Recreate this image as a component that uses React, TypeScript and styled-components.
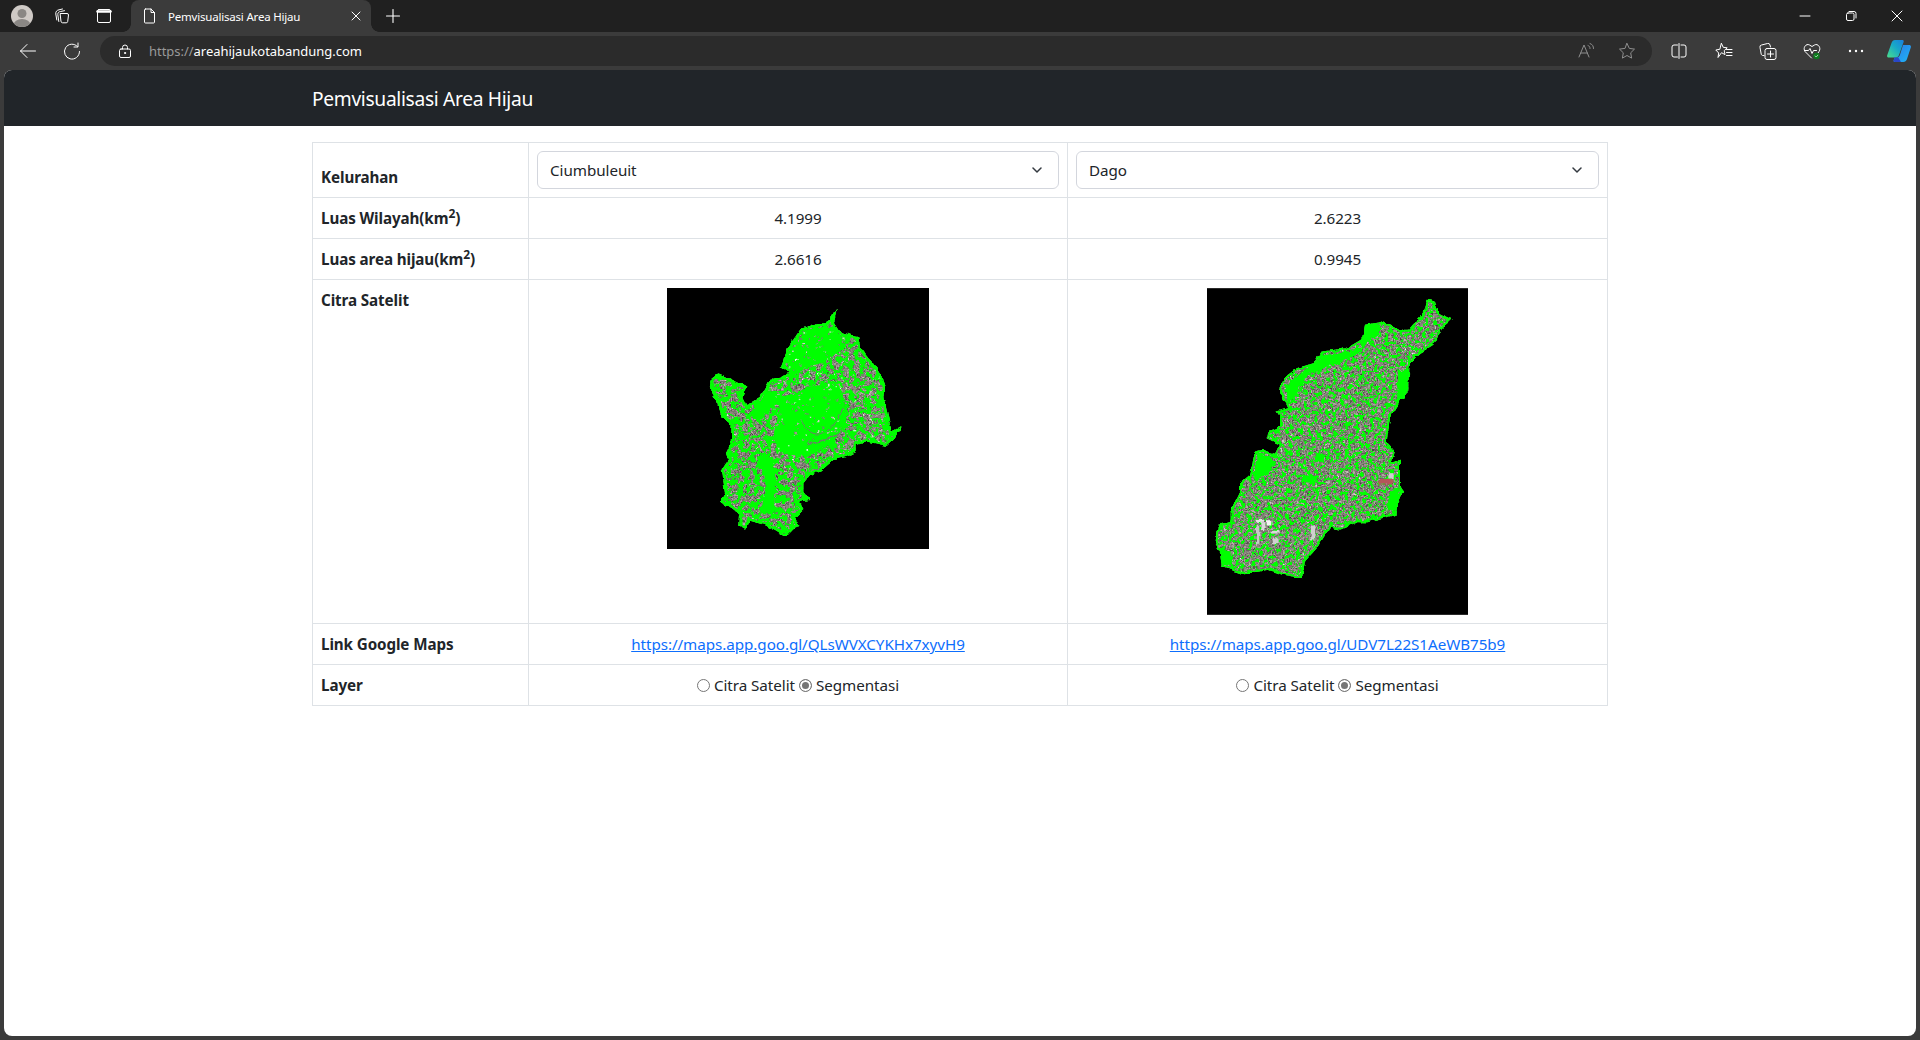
import React from "react";
import styled, { createGlobalStyle } from "styled-components";

const GlobalStyle = createGlobalStyle`
  html, body { margin: 0; padding: 0; height: 1040px; background: #3b3b3b; overflow: hidden; }
  body { font-family: "Noto Sans", "Open Sans", "Liberation Sans", sans-serif; }
  * { box-sizing: border-box; }
`;

const Frame = styled.div`
  width: 1920px;
  height: 1040px;
  display: flex;
  flex-direction: column;
  background: #3b3b3b;
`;

const TabStrip = styled.div`
  height: 32px;
  flex: none;
  display: flex;
  align-items: center;
  background: #202020;
  color: #fff;
`;

const Avatar = styled.div`
  width: 22px;
  height: 22px;
  margin-left: 11px;
  border-radius: 50%;
  flex: none;
  overflow: hidden;
  display: flex;
`;

const StripButton = styled.div<{ $w: number }>`
  width: ${(p) => p.$w}px;
  height: 32px;
  flex: none;
  display: flex;
  align-items: center;
  justify-content: center;
`;

const Tab = styled.div`
  position: relative;
  width: 240px;
  height: 32px;
  margin-left: 14px;
  flex: none;
  display: flex;
  align-items: center;
  padding: 0 10px 0 11px;
  background: #3b3b3b;
  border-radius: 8px 8px 0 0;

  &::before,
  &::after {
    content: "";
    position: absolute;
    bottom: 0;
    width: 8px;
    height: 8px;
  }
  &::before {
    left: -8px;
    background: radial-gradient(circle at 0 0, #202020 7.5px, #3b3b3b 8px);
  }
  &::after {
    right: -8px;
    background: radial-gradient(circle at 100% 0, #202020 7.5px, #3b3b3b 8px);
  }
`;

const TabTitle = styled.div`
  margin-left: 10px;
  flex: 1;
  font-size: 11.5px;
  letter-spacing: -0.2px;
  white-space: nowrap;
  color: #fff;
`;

const Spacer = styled.div`
  flex: 1;
`;

const Toolbar = styled.div`
  height: 38px;
  flex: none;
  display: flex;
  align-items: center;
  background: #3b3b3b;
`;

const NavButton = styled.div<{ $w: number }>`
  width: ${(p) => p.$w}px;
  height: 30px;
  flex: none;
  display: flex;
  align-items: center;
  justify-content: center;
`;

const AddressBar = styled.div`
  width: 1552px;
  height: 30px;
  margin: 0 4px 0 12px;
  flex: none;
  display: flex;
  align-items: center;
  padding: 0 5px 0 18px;
  border-radius: 15px;
  background: #2b2b2b;
`;

const Url = styled.div`
  margin-left: 17px;
  flex: 1;
  font-size: 13px;
  letter-spacing: -0.03px;
  color: #fff;
  white-space: nowrap;
`;

const UrlScheme = styled.span`
  color: #9a9a9a;
`;

const Viewport = styled.div`
  flex: 1;
  min-height: 0;
  margin: 0 4px 4px;
  display: flex;
  flex-direction: column;
  background: #fff;
  border-radius: 8px;
  overflow: hidden;
`;

const Navbar = styled.nav`
  height: 56px;
  flex: none;
  display: flex;
  align-items: center;
  padding-left: 308px;
  background: #212529;
  color: #fff;
  font-size: 19.2px;
  letter-spacing: -0.32px;
`;

const Content = styled.main`
  padding: 16px 0 0 308px;
`;

const CompareTable = styled.table`
  width: 1295px;
  border-collapse: collapse;
  table-layout: fixed;
  color: #212529;
  font-size: 15.2px;
  letter-spacing: -0.05px;
  line-height: 24px;
`;

const HeadCell = styled.th<{ $bottom?: boolean }>`
  padding: 8px;
  border: 1px solid #dee2e6;
  text-align: left;
  font-weight: 700;
  letter-spacing: -0.1px;
  vertical-align: ${(p) => (p.$bottom ? "bottom" : "top")};
  sup { font-size: 12px; line-height: 0; }
`;

const Cell = styled.td`
  padding: 8px;
  border: 1px solid #dee2e6;
  text-align: center;
  vertical-align: top;
`;

const SelectBox = styled.div`
  height: 38px;
  display: flex;
  align-items: center;
  justify-content: space-between;
  padding: 0 16px 0 12px;
  text-align: left;
  background: #fff;
  border: 1px solid #d3d6dd;
  border-radius: 6px;
`;

const MapLink = styled.a`
  color: #0d6efd;
  text-decoration: underline;
`;

const RadioGroup = styled.div`
  display: flex;
  align-items: center;
  justify-content: center;
  height: 24px;
`;

const RadioLabel = styled.span`
  margin-left: 4px;
  margin-right: 4px;

  &:last-child {
    margin-right: 0;
  }
`;

const RadioDot = styled.span<{ $on?: boolean }>`
  width: 13px;
  height: 13px;
  flex: none;
  border-radius: 50%;
  border: 1px solid #767676;
  background: ${(p) => (p.$on ? "#767676" : "#fff")};
  box-shadow: ${(p) => (p.$on ? "inset 0 0 0 2px #fff" : "none")};
`;

const MapSvg = styled.svg`
  display: block;
  margin: 0 auto;
  filter: blur(0.5px);
`;

const Chevron = () => (
  <svg width="10" height="6" viewBox="0 0 10 6" fill="none" stroke="#343a40" strokeWidth="1.5" strokeLinecap="round" strokeLinejoin="round">
    <path d="M1 1l4 4 4-4" />
  </svg>
);

const Ic = ({ s = 16, c = "#fff", w = 1, children }: { s?: number; c?: string; w?: number; children: React.ReactNode }) => (
  <svg width={s} height={s} viewBox={`0 0 ${s} ${s}`} fill="none" stroke={c} strokeWidth={w} strokeLinecap="round" strokeLinejoin="round">
    {children}
  </svg>
);

const Copilot = () => (
  <svg width="24" height="22" viewBox="0 0 24 22">
    <defs>
      <linearGradient id="cpA" x1="0" y1="1" x2="1" y2="0">
        <stop offset="0" stopColor="#4ade8c" />
        <stop offset="0.55" stopColor="#17a8c8" />
        <stop offset="1" stopColor="#1a7fe0" />
      </linearGradient>
      <linearGradient id="cpB" x1="0" y1="0" x2="1" y2="1">
        <stop offset="0" stopColor="#2a78e8" />
        <stop offset="1" stopColor="#1fb6f5" />
      </linearGradient>
    </defs>
    <path d="M8 0h7c1.400 0 2 .8 1.600 2L12 15c-.6 1.600-1.600 2.500-3.200 2.500H2C.5 17.500-.3 16.500.3 15L4.500 3C5.200 1 6.300 0 8 0z" fill="url(#cpA)" />
    <path d="M16 5h6c1.500 0 2.300 1 1.800 2.500L20 19c-.6 2-2 3-3.800 3H8c-1.200 0-1.700-.8-1.300-2l1-2.500h2c1.600 0 2.600-.9 3.200-2.500z" fill="url(#cpB)" />
    <path d="M11 17l3 5H8c-1.200 0-1.700-.8-1.300-2l1-2.500h2z" fill="#2a46c8" />
  </svg>
);

// seeded speckles so both maps stay the same between runs
const speckles = (seed: number, count: number, x0: number, y0: number, w: number, h: number, palette: string[]) => {
  let v = seed;
  const next = () => {
    v = (v * 16807) % 2147483647;
    return v / 2147483647;
  };
  const out: React.ReactNode[] = [];
  for (let i = 0; i < count; i++) {
    out.push(
      <rect
        key={i}
        x={x0 + next() * w}
        y={y0 + next() * h}
        width={2.5 + next() * 4}
        height={2.5 + next() * 3}
        fill={palette[Math.floor(next() * palette.length)]}
      />,
    );
  }
  return out;
};

const GREYS = ["#f2f2f2", "#b9b5b0", "#a5948f", "#8a8a82", "#8d7d78", "#75806f", "#9a9590", "#7c7c74", "#d8d0cc"];

const CIUM_OUTLINE =
  "M530 85L522 130L535 150L570 165L595 172L600 200L625 235L640 250L665 290L675 320L670 350L680 390L688 425L695 455L725 438L700 480L680 498L650 490L620 485L590 495L590 515L560 530L520 540L480 575L450 585L430 610L430 640L448 660L420 665L430 690L405 715L418 738L400 745L375 770L315 735L270 722L255 752L238 735L240 705L205 680L180 668L195 640L190 600L185 570L205 540L198 520L212 490L215 435L185 410L175 375L155 335L150 300L175 280L262 320L250 350L262 375L300 350L330 300L390 278L362 265L385 200L420 150L465 130L500 130Z";

const DAGO_OUTLINE =
  "M685 45L700 50L715 85L755 103L725 130L700 180L660 205L630 235L625 290L625 320L600 350L570 400L560 470L585 500L575 530L600 525L600 600L610 615L590 660L590 690L545 700L500 712L470 712L420 735L390 728L350 790L315 830L305 880L250 870L205 855L130 868L90 855L65 845L60 800L43 770L55 720L95 710L95 670L120 620L120 595L150 570L165 500L190 495L225 510L240 480L200 460L205 440L240 425L240 395L230 380L265 370L240 320L250 280L290 250L340 235L365 200L440 190L490 160L495 120L550 110L600 135L625 135L670 85L680 55Z";

const GreyNoise = ({ id, seed }: { id: string; seed: number }) => (
  <filter id={id} x="0" y="0" width="100%" height="100%" colorInterpolationFilters="sRGB">
    <feTurbulence type="fractalNoise" baseFrequency="0.24" numOctaves="2" seed={seed} />
    <feColorMatrix values="0.8 0 0 0 0.12  0.75 0 0 0 0.12  0.75 0 0 0 0.1  0 0 0 0 1" />
  </filter>
);

const GreenNoise = ({ id, seed, freq, cut }: { id: string; seed: number; freq: number; cut: number }) => (
  <filter id={id} x="0" y="0" width="100%" height="100%" colorInterpolationFilters="sRGB">
    <feTurbulence type="fractalNoise" baseFrequency={freq} numOctaves="4" seed={seed} />
    <feColorMatrix values={`0 0 0 0 0  0 0 0 0 1  0 0 0 0 0  14 0 0 0 ${-14 * cut}`} />
  </filter>
);

const Rough = ({ id, seed }: { id: string; seed: number }) => (
  <filter id={id} x="0" y="0" width="100%" height="100%" colorInterpolationFilters="sRGB">
    <feTurbulence type="fractalNoise" baseFrequency="0.05" numOctaves="2" seed={seed} result="n" />
    <feDisplacementMap in="SourceGraphic" in2="n" scale="14" xChannelSelector="R" yChannelSelector="G" />
  </filter>
);

const MapCiumbuleuit = () => (
  <MapSvg width="262" height="261" viewBox="21 24 786 783">
    <defs>
      <clipPath id="ciumClip">
        <path d={CIUM_OUTLINE} />
      </clipPath>
      <GreyNoise id="ciumGrey" seed={5} />
      <GreenNoise id="ciumGreen" seed={7} freq={0.06} cut={0.47} />
      <Rough id="ciumRough" seed={3} />
    </defs>
    <rect x="21" y="24" width="786" height="783" fill="#000" />
    <g filter="url(#ciumRough)">
      <g clipPath="url(#ciumClip)">
        <rect x="21" y="24" width="786" height="783" filter="url(#ciumGrey)" />
        {speckles(11, 500, 150, 85, 580, 690, GREYS)}
        <rect x="21" y="24" width="786" height="783" filter="url(#ciumGreen)" />
        <path d="M380 230L440 150L520 140L560 200L500 240L430 270L390 290Z" fill="#00ff00" />
        <path d="M340 470L360 360L440 320L540 310L560 420L520 490L440 530L360 520Z" fill="#00ff00" />
        <path d="M270 400L330 330L380 330L340 380L300 420Z" fill="#00ff00" />
        <path d="M290 530L320 620L300 700L340 700L350 600L330 520Z" fill="#00ff00" />
        {speckles(23, 420, 340, 150, 360, 400, GREYS)}
        <path d="M425 420C450 490 520 470 550 380" fill="none" stroke="#6f7a6a" strokeWidth="3" />
        <path d="M440 495C480 480 510 480 540 460" fill="none" stroke="#6f7a6a" strokeWidth="4" />
        <path d={CIUM_OUTLINE} fill="none" stroke="#00ff00" strokeWidth="18" />
      </g>
    </g>
  </MapSvg>
);

const MapDago = () => (
  <MapSvg width="261" height="327" viewBox="21 10 783 980">
    <defs>
      <clipPath id="dagoClip">
        <path d={DAGO_OUTLINE} />
      </clipPath>
      <GreyNoise id="dagoGrey" seed={9} />
      <GreenNoise id="dagoGreen" seed={12} freq={0.09} cut={0.52} />
      <Rough id="dagoRough" seed={6} />
    </defs>
    <rect x="21" y="10" width="783" height="980" fill="#000" />
    <g filter="url(#dagoRough)">
      <g clipPath="url(#dagoClip)">
        <rect x="21" y="10" width="783" height="980" filter="url(#dagoGrey)" />
        {speckles(31, 1000, 40, 45, 720, 840, GREYS)}
        <rect x="21" y="10" width="783" height="980" filter="url(#dagoGreen)" />
        <path d={DAGO_OUTLINE} fill="none" stroke="#00ff00" strokeWidth="12" />
        <path d="M490 120L545 120L530 150L470 195L370 215L300 265L260 300L262 360L285 335L320 270L400 240L480 205Z" fill="#00ff00" />
        <path d="M175 505L215 520L225 530L200 570L160 590Z" fill="#00ff00" />
        <path d="M55 790L65 840L100 845L90 800Z" fill="#00ff00" />
        <path d="M595 260L625 250L620 340L590 370Z" fill="#00ff00" />
        <path d="M570 620L600 610L590 675L560 680Z" fill="#00ff00" />
        <path d="M305 570L350 575L340 595L305 590Z" fill="#00ff00" />
        <path d="M345 505L375 510L370 530L345 530Z" fill="#00ff00" />
        <rect x="535" y="585" width="45" height="14" fill="#b5565a" />
        <rect x="565" y="562" width="16" height="22" fill="#cfcfcf" />
        <rect x="168" y="702" width="24" height="9" fill="#e6e6e6" />
        <rect x="184" y="712" width="12" height="24" fill="#d8d8d8" />
        <rect x="200" y="706" width="14" height="16" fill="#f4f4f4" />
        <rect x="168" y="720" width="10" height="60" fill="#c8c8c8" />
        <rect x="215" y="738" width="24" height="8" fill="#d8d8d8" />
        <rect x="218" y="758" width="18" height="20" fill="#d0d0d0" />
        <rect x="332" y="722" width="14" height="42" fill="#cfcfcf" />
      </g>
    </g>
  </MapSvg>
);

const Layers = () => (
  <RadioGroup>
    <RadioDot />
    <RadioLabel>Citra Satelit</RadioLabel>
    <RadioDot $on />
    <RadioLabel>Segmentasi</RadioLabel>
  </RadioGroup>
);

const App = () => (
  <Frame>
    <GlobalStyle />
    <TabStrip>
      <Avatar>
        <svg width="22" height="22" viewBox="0 0 22 22">
          <rect width="22" height="22" fill="#cfcac6" />
          <circle cx="11" cy="8.500" r="4.500" fill="#8a8784" />
          <ellipse cx="11" cy="20" rx="8.500" ry="6" fill="#8a8784" />
        </svg>
      </Avatar>
      <StripButton $w={58}>
        <Ic>
          <path d="M6.500 5.500h6.500a1.500 1.500 0 0 1 1.500 1.500l-.8 6.500a1.500 1.500 0 0 1-1.500 1.300H8.500a1.500 1.500 0 0 1-1.500-1.300z" />
          <path d="M4.800 13.500L3.800 6.500C3.700 4.500 5 3.700 6.500 3.500l4-.8" />
          <path d="M2.800 12L1.800 6C1.500 3.500 3 2.200 5 1.800L8.500 1" />
        </Ic>
      </StripButton>
      <StripButton $w={26}>
        <Ic>
          <rect x="1.500" y="1.500" width="13" height="13" rx="1.500" />
          <path d="M1.500 3.500h13" strokeWidth="2.500" />
        </Ic>
      </StripButton>
      <Tab>
        <Ic>
          <path d="M3.500 1h5.500l3.500 3.500V14a1 1 0 0 1-1 1h-8a1 1 0 0 1-1-1V2a1 1 0 0 1 1-1z" />
          <path d="M9 1v3.500h3.500" />
        </Ic>
        <TabTitle>Pemvisualisasi Area Hijau</TabTitle>
        <Ic s={10} w={1}>
          <path d="M1 1l8 8M9 1l-8 8" />
        </Ic>
      </Tab>
      <StripButton $w={44}>
        <Ic s={14} w={1.100}>
          <path d="M7 0.500v13M0.500 7h13" />
        </Ic>
      </StripButton>
      <Spacer />
      <StripButton $w={46}>
        <Ic s={12}>
          <path d="M1 6h10" />
        </Ic>
      </StripButton>
      <StripButton $w={46}>
        <Ic s={12}>
          <rect x="1.500" y="3" width="7.500" height="7.500" rx="1.500" />
          <path d="M4 1.500h5a2 2 0 0 1 2 2V8" />
        </Ic>
      </StripButton>
      <StripButton $w={46}>
        <Ic s={12}>
          <path d="M1 1l10 10M11 1L1 11" />
        </Ic>
      </StripButton>
    </TabStrip>
    <Toolbar>
      <NavButton $w={56}>
        <Ic s={18} w={1}>
          <path d="M1.500 9h15M8 2.500L1.500 9 8 15.500" />
        </Ic>
      </NavButton>
      <NavButton $w={32}>
        <Ic s={18} w={1}>
          <path d="M14.500 4.500A7.500 7.500 0 1 0 16.500 9.500" />
          <path d="M15 1v4h-4" />
        </Ic>
      </NavButton>
      <AddressBar>
        <Ic s={14} w={1}>
          <rect x="1.500" y="5" width="11" height="8.500" rx="1.500" />
          <path d="M4.500 5V3.500a2.500 2.500 0 0 1 5 0V5" />
          <circle cx="7" cy="9" r="0.600" fill="#fff" />
        </Ic>
        <Url>
          <UrlScheme>https://</UrlScheme>areahijaukotabandung.com
        </Url>
        <NavButton $w={40}>
          <Ic s={18} c="#8f8f8f" w={1}>
            <path d="M1 15L6 3l5 12M2.800 11h6.500" />
            <path d="M10 3.500c1.500.5 2 1.500 2 3M12 1.500c2.500.8 3.500 2.800 3.500 5" />
          </Ic>
        </NavButton>
        <NavButton $w={40}>
          <Ic s={18} c="#8f8f8f" w={1}>
            <path d="M9 1.500l2.300 4.900 5.200.7-3.800 3.700.9 5.300L9 13.500l-4.600 2.600.9-5.300L1.500 7.100l5.200-.7z" />
          </Ic>
        </NavButton>
      </AddressBar>
      <NavButton $w={46}>
        <Ic s={16}>
          <path d="M6.500 2H3a2 2 0 0 0-2 2v8a2 2 0 0 0 2 2h3.500M10 2h3a2 2 0 0 1 2 2v8a2 2 0 0 1-2 2h-3M8 0.500v15" />
        </Ic>
      </NavButton>
      <NavButton $w={44}>
        <Ic s={18}>
          <path d="M6.500 1.500l1.700 3.800 4 .5-3 2.800.8 4-3.500-1.900L3 15.500l.7-4.500L.8 8l3.700-.7z" />
          <path d="M11.500 7.500h5.500M11.500 10.500h5.500M11.500 13.500h5.500" />
        </Ic>
      </NavButton>
      <NavButton $w={44}>
        <Ic s={18}>
          <path d="M5 13.500H4c-1 0-1.500-.5-1.800-1.500L1 5.500a2 2 0 0 1 1.500-2.500l6-1.500a2 2 0 0 1 2.500 1.500l.5 2" />
          <rect x="6" y="6.500" width="11" height="11" rx="2" />
          <path d="M11.500 9v6M8.500 12h6" />
        </Ic>
      </NavButton>
      <NavButton $w={44}>
        <svg width="18" height="18" viewBox="0 0 18 18" fill="none" stroke="#fff" strokeLinejoin="round" strokeLinecap="round">
          <path d="M8.500 16L2 9.500C-.5 6 3 1 6.500 3L9 4.500 11.500 3C15 1 18.500 6 16 9.500L15 11" />
          <path d="M1.500 8.500h4l1.500-2 2 5 1.500-3h3" />
          <circle cx="13.500" cy="14" r="3.200" fill="#0d7a1e" stroke="none" />
          <path d="M12.200 14l1 1 1.600-1.800" stroke="#bff0c5" strokeWidth="0.800" />
        </svg>
      </NavButton>
      <NavButton $w={44}>
        <svg width="16" height="4" viewBox="0 0 16 4" fill="#fff">
          <circle cx="2" cy="2" r="1.200" />
          <circle cx="8" cy="2" r="1.200" />
          <circle cx="14" cy="2" r="1.200" />
        </svg>
      </NavButton>
      <NavButton $w={42}>
        <Copilot />
      </NavButton>
    </Toolbar>
    <Viewport>
      <Navbar>Pemvisualisasi Area Hijau</Navbar>
      <Content>
        <CompareTable>
          <colgroup>
            <col width="216" />
            <col width="539" />
            <col width="540" />
          </colgroup>
          <tbody>
            <tr>
              <HeadCell $bottom>Kelurahan</HeadCell>
              <Cell>
                <SelectBox>
                  Ciumbuleuit
                  <Chevron />
                </SelectBox>
              </Cell>
              <Cell>
                <SelectBox>
                  Dago
                  <Chevron />
                </SelectBox>
              </Cell>
            </tr>
            <tr>
              <HeadCell>
                Luas Wilayah(km<sup>2</sup>)
              </HeadCell>
              <Cell>4.1999</Cell>
              <Cell>2.6223</Cell>
            </tr>
            <tr>
              <HeadCell>
                Luas area hijau(km<sup>2</sup>)
              </HeadCell>
              <Cell>2.6616</Cell>
              <Cell>0.9945</Cell>
            </tr>
            <tr>
              <HeadCell>Citra Satelit</HeadCell>
              <Cell>
                <MapCiumbuleuit />
              </Cell>
              <Cell>
                <MapDago />
              </Cell>
            </tr>
            <tr>
              <HeadCell>Link Google Maps</HeadCell>
              <Cell>
                <MapLink href="#">https://maps.app.goo.gl/QLsWVXCYKHx7xyvH9</MapLink>
              </Cell>
              <Cell>
                <MapLink href="#">https://maps.app.goo.gl/UDV7L22S1AeWB75b9</MapLink>
              </Cell>
            </tr>
            <tr>
              <HeadCell>Layer</HeadCell>
              <Cell>
                <Layers />
              </Cell>
              <Cell>
                <Layers />
              </Cell>
            </tr>
          </tbody>
        </CompareTable>
      </Content>
    </Viewport>
  </Frame>
);

export default App;
